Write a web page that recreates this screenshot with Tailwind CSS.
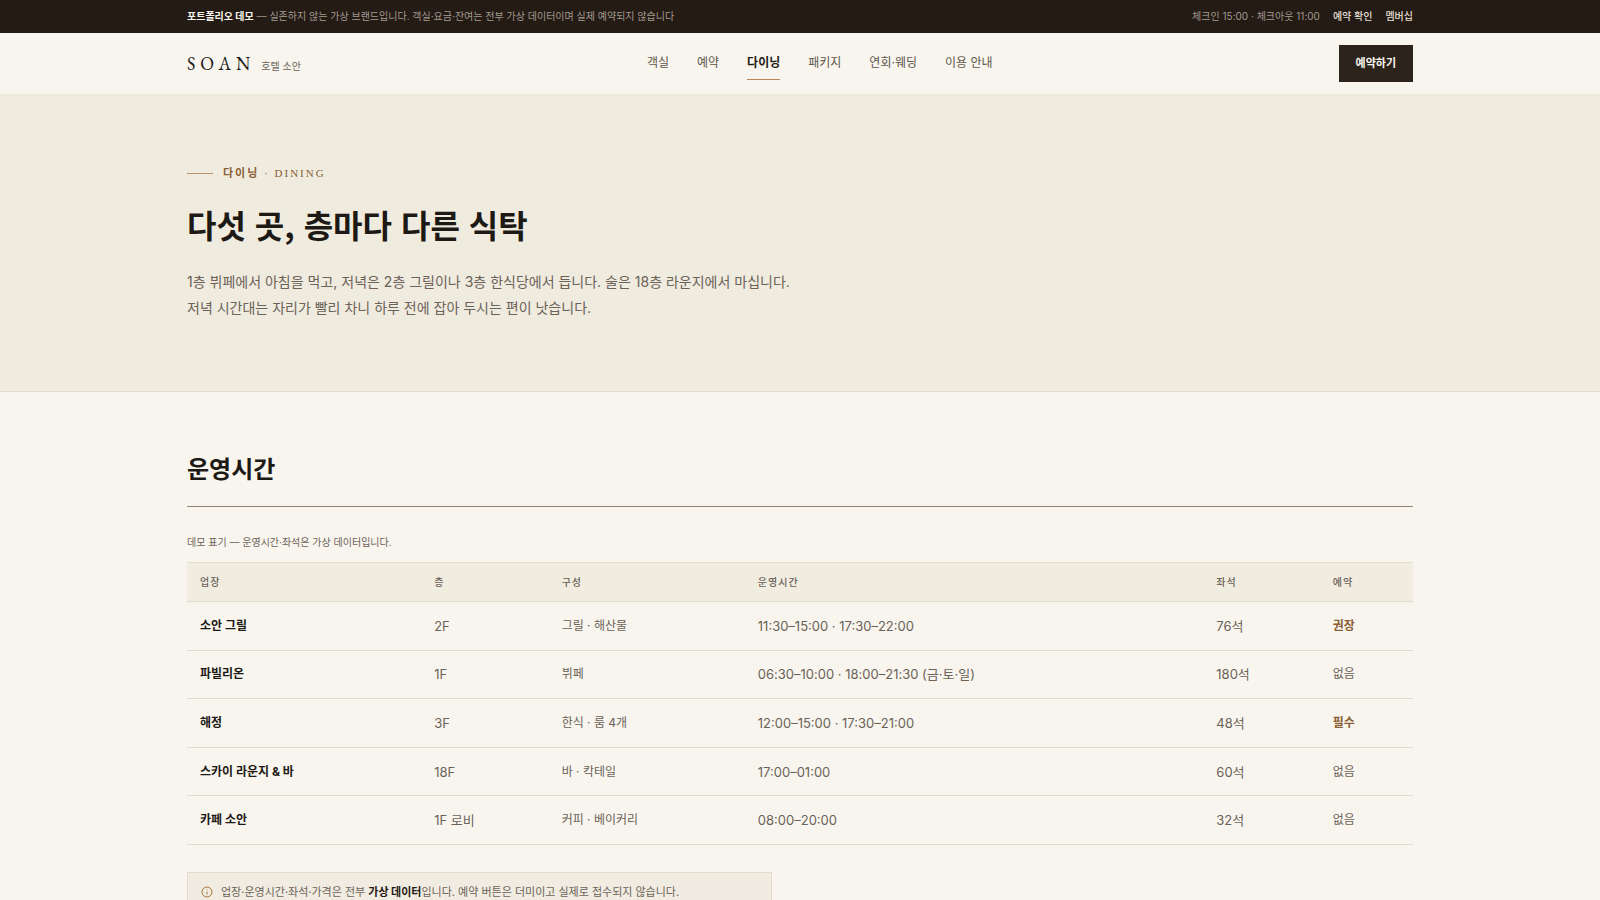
<!DOCTYPE html>
<html lang="ko">
<head>
    <meta charset="UTF-8">
    <meta name="viewport" content="width=device-width, initial-scale=1.0">
    <script src="https://cdn.jsdelivr.net/npm/@tailwindcss/browser@4"></script>
    <title>다이닝 | 호텔 소안</title>
</head>
<body class="bg-[#f8f5ee] text-[#1d1915] font-[Inter,'Noto_Sans_CJK_KR',sans-serif]">

    <!-- 상단 안내 -->
    <div class="bg-[#241b15] text-[#a39a90] text-[10px] leading-4">
        <div class="max-w-[1226px] mx-auto pt-2 pb-[9px] flex items-center justify-between">
            <p><strong class="font-bold text-[#f8f5ee]">포트폴리오 데모</strong> — 실존하지 않는 가상 브랜드입니다. 객실·요금·잔여는 전부 가상 데이터이며 실제 예약되지 않습니다</p>
            <div class="flex gap-[13px]">
                <span>체크인 15:00 · 체크아웃 11:00</span>
                <a href="#" class="font-medium text-[#e6dfd3]">예약 확인</a>
                <a href="#" class="font-medium text-[#e6dfd3]">멤버십</a>
            </div>
        </div>
    </div>

    <header class="bg-[#f7f5ed]">
        <div class="max-w-[1226px] mx-auto h-[61px] flex items-center justify-between">
            <a href="/" class="flex items-baseline gap-1.5">
                <span class="font-['EB_Garamond','Liberation_Serif',serif] text-lg leading-6 tracking-[5px]">SOAN</span>
                <span class="text-[10px] text-[#6b6258]">호텔 소안</span>
            </a>
            <nav class="flex gap-7 text-xs leading-4 text-[#5e564c]">
                <a href="#" class="py-2">객실</a>
                <a href="#" class="py-2">예약</a>
                <a href="#" class="py-2 font-bold text-[#1d1915] border-b border-[#b8885a]" aria-current="page">다이닝</a>
                <a href="#" class="py-2">패키지</a>
                <a href="#" class="py-2">연회·웨딩</a>
                <a href="#" class="py-2">이용 안내</a>
            </nav>
            <button type="button" class="bg-[#2c231b] text-[#f8f5ee] text-[11px] font-bold px-[17px] h-[37px]">예약하기</button>
        </div>
    </header>

    <main>
        <section class="bg-[#f0ebdf] border-b border-[#e2dccf]">
            <div class="max-w-[1226px] mx-auto pt-[71px] pb-[70px]">
                <p class="flex items-center gap-[10px] text-[11px] leading-4 text-[#8a5f35]">
                    <span class="w-[26px] h-px bg-[#b8956c]"></span>
                    <span class="tracking-[2px] font-['Liberation_Serif','Noto_Sans_CJK_KR',serif]"><b class="font-bold">다이닝</b> · DINING</span>
                </p>
                <h1 class="mt-[18px] text-[32px] leading-[50px] font-bold font-['Noto_Sans_CJK_KR',sans-serif]">다섯 곳, 층마다 다른 식탁</h1>
                <p class="mt-5 text-sm leading-[26px] text-[#6b6258]">1층 뷔페에서 아침을 먹고, 저녁은 2층 그릴이나 3층 한식당에서 듭니다. 술은 18층 라운지에서 마십니다.<br>저녁 시간대는 자리가 빨리 차니 하루 전에 잡아 두시는 편이 낫습니다.</p>
            </div>
        </section>

        <section class="max-w-[1226px] mx-auto pt-[60px] pb-16">
            <h2 class="text-2xl leading-9 font-bold pb-[18px] border-b border-[#8f8476]">운영시간</h2>

            <table class="w-full h-[283px] mt-[27px] table-fixed text-left text-xs leading-4 text-[#6b6258]">
                <caption class="text-left text-[10px] leading-4 pb-3">데모 표기 — 운영시간·좌석은 가상 데이터입니다.</caption>
                <thead class="bg-[#f0ece0] text-[10px]">
                    <tr class="border-y border-[#e2dccf]">
                        <th scope="col" class="w-[19.1%] px-[13px] py-[11px] font-medium tracking-[1px]">업장</th>
                        <th scope="col" class="w-[10.4%] px-[13px] font-medium tracking-[1px]">층</th>
                        <th scope="col" class="w-[16%] px-[13px] font-medium tracking-[1px]">구성</th>
                        <th scope="col" class="w-[37.4%] px-[13px] font-medium tracking-[1px]">운영시간</th>
                        <th scope="col" class="w-[9.5%] px-[13px] font-medium tracking-[1px]">좌석</th>
                        <th scope="col" class="px-[13px] font-medium tracking-[1px]">예약</th>
                    </tr>
                </thead>
                <tbody>
                    <tr class="border-b border-[#e2dccf]">
                        <th scope="row" class="px-[13px] py-[15px] font-bold text-[#1d1915]">소안 그릴</th>
                        <td class="px-[13px] text-[13px]">2F</td>
                        <td class="px-[13px]">그릴 · 해산물</td>
                        <td class="px-[13px] text-[13px]">11:30–15:00 · 17:30–22:00</td>
                        <td class="px-[13px] text-[13px]">76석</td>
                        <td class="px-[13px] font-bold text-[#8a5f35]">권장</td>
                    </tr>
                    <tr class="border-b border-[#e2dccf]">
                        <th scope="row" class="px-[13px] py-[15px] font-bold text-[#1d1915]">파빌리온</th>
                        <td class="px-[13px] text-[13px]">1F</td>
                        <td class="px-[13px]">뷔페</td>
                        <td class="px-[13px] text-[13px]">06:30–10:00 · 18:00–21:30 (금·토·일)</td>
                        <td class="px-[13px] text-[13px]">180석</td>
                        <td class="px-[13px]">없음</td>
                    </tr>
                    <tr class="border-b border-[#e2dccf]">
                        <th scope="row" class="px-[13px] py-[15px] font-bold text-[#1d1915]">해정</th>
                        <td class="px-[13px] text-[13px]">3F</td>
                        <td class="px-[13px]">한식 · 룸 4개</td>
                        <td class="px-[13px] text-[13px]">12:00–15:00 · 17:30–21:00</td>
                        <td class="px-[13px] text-[13px]">48석</td>
                        <td class="px-[13px] font-bold text-[#8a5f35]">필수</td>
                    </tr>
                    <tr class="border-b border-[#e2dccf]">
                        <th scope="row" class="px-[13px] py-[15px] font-bold text-[#1d1915]">스카이 라운지 &amp; 바</th>
                        <td class="px-[13px] text-[13px]">18F</td>
                        <td class="px-[13px]">바 · 칵테일</td>
                        <td class="px-[13px] text-[13px]">17:00–01:00</td>
                        <td class="px-[13px] text-[13px]">60석</td>
                        <td class="px-[13px]">없음</td>
                    </tr>
                    <tr class="border-b border-[#e2dccf]">
                        <th scope="row" class="px-[13px] py-[15px] font-bold text-[#1d1915]">카페 소안</th>
                        <td class="px-[13px] text-[13px]">1F 로비</td>
                        <td class="px-[13px]">커피 · 베이커리</td>
                        <td class="px-[13px] text-[13px]">08:00–20:00</td>
                        <td class="px-[13px] text-[13px]">32석</td>
                        <td class="px-[13px]">없음</td>
                    </tr>
                </tbody>
            </table>

            <div class="mt-[27px] max-w-[585px] flex items-center gap-2 bg-[#f1ece1] border border-[#e2dccf] px-[13px] py-[10px] text-[11px] leading-[18px] text-[#6b6258]">
                <svg class="size-3 shrink-0 text-[#a5753f]" viewBox="0 0 24 24" fill="none" stroke="currentColor" stroke-width="2" aria-hidden="true">
                    <circle cx="12" cy="12" r="10"/>
                    <path d="M12 11v6M12 7v1"/>
                </svg>
                <p>업장·운영시간·좌석·가격은 전부 <strong class="font-bold text-[#1d1915]">가상 데이터</strong>입니다. 예약 버튼은 더미이고 실제로 접수되지 않습니다.</p>
            </div>
        </section>
    </main>
</body>
</html>
